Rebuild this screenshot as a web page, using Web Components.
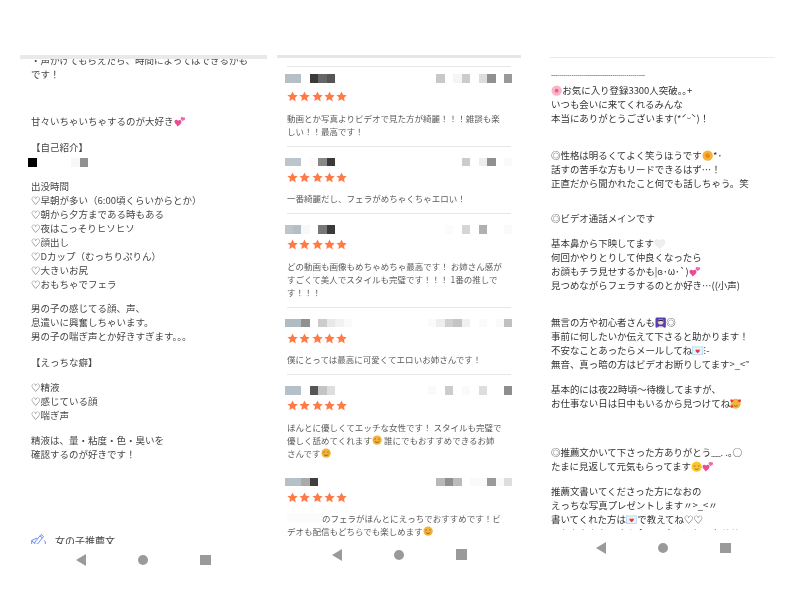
<!DOCTYPE html>
<html lang="ja">
<head>
<meta charset="utf-8">
<title>profile screens</title>
<style>
  html, body { margin: 0; height: 600px; overflow: hidden; background: #fff; }
  body { font-family: "Noto Sans CJK JP", "Noto Sans", sans-serif; }
</style>
</head>
<body>
<screen-strip>
  <phone-shot style="--shot-w:247px; --rule-h:4px; --rule-c:#e9e9e9; --clip-h:485px; --nav-top:10px; --nav-left:56px">
    <profile-text style="--fs:9.5px; --fc:#454545; --pad:11px">
      <p style="margin-top:-6px">・声かけてもらえたら、時間によってはできるかも<br>です！</p>
      <p style="margin-top:33px">甘々いちゃいちゃするのが大好き<e-moji kind="hearts"></e-moji></p>
      <p style="margin-top:12px">【自己紹介】</p>
      <pixel-strip cells="#000 . . . . #f8f8f8 #919191" size="8.6" style="margin:4px 0 0 -3px"></pixel-strip>
      <p style="margin-top:12px">出没時間<br>♡早朝が多い（6:00頃くらいからとか）<br>♡朝から夕方まである時もある<br>♡夜はこっそりヒソヒソ<br>♡顔出し<br>♡Dカップ（むっちりぷりん）<br>♡大きいお尻<br>♡おもちゃでフェラ</p>
      <p style="margin-top:10px">男の子の感じてる顔、声、<br>息遣いに興奮しちゃいます。<br>男の子の喘ぎ声とか好きすぎます。。。</p>
      <p style="margin-top:12px">【えっちな癖】</p>
      <p style="margin-top:11px">♡精液<br>♡感じている顔<br>♡喘ぎ声</p>
      <p style="margin-top:11px">精液は、量・粘度・色・臭いを<br>確認するのが好きです！</p>
      <section-head>女の子推薦文</section-head>
    </profile-text>
  </phone-shot>

  <phone-shot style="--shot-w:244px; --rule-h:2.5px; --rule-c:#e6e6e6; --clip-h:483px; --nav-top:8px; --nav-left:55px; margin-left:10px">
    <review-list>
      <review-row first cells="#b5bfc6 #b5bfc6 . #3a3a3a #666 #555 . . . . . . . . . . . . #c8c8c8 . #f5f5f5 #ccc . #ddd #909090 . #999">動画とか写真よりビデオで見た方が綺麗！！！雑談も楽<br>しい！！最高です！</review-row>
      <review-row cells="#bcc5cc #bcc5cc . #fbfbfb #888 #3a3a3a . . . . . . . . . . . . . . . #ccc . #eee #909090 . #fafafa">一番綺麗だし、フェラがめちゃくちゃエロい！</review-row>
      <review-row cells="#bcc5cc #b5bfc6 #f8f8f8 . #777 #3a3a3a . . . . . . . . . . . . . #fbfbfb . #d5d5d5 . #b0b0b0 . . #fafafa">どの動画も画像もめちゃめちゃ最高です！ お姉さん感が<br>すごくて美人でスタイルも完璧です！！！ 1番の推しで<br>す！！！</review-row>
      <review-row cells="#b0bcc4 #b0bcc4 #909090 . #ccc #e8e8e8 #f2f2f2 #fafafa . . . . . . . . . #fafafa #eee #d0d0d0 #c4c4c4 #f0f0f0 . #fafafa . #fafafa #c0c0c0">僕にとっては最高に可愛くてエロいお姉さんです！</review-row>
      <review-row cells="#b5c0c8 #b5c0c8 . #555 #c4c4c4 #ddd . . . . . . . . . . . #fafafa . #ccc . #fafafa . #ddd . . #8e8e8e">ほんとに優しくてエッチな女性です！ スタイルも完璧で<br>優しく舐めてくれます<e-moji kind="smile"></e-moji> 誰にでもおすすめできるお姉<br>さんです<e-moji kind="smile"></e-moji></review-row>
      <review-row last cells="#b5c0c8 #b5c0c8 #aaa #3f3f3f . . . . . . . . . . . . . . #b8b8b8 #909090 #bbb . #fafafa #fafafa #999 #fafafa #ddd"><span class="hide"></span>のフェラがほんとにえっちでおすすめです！ビ<br>デオも配信もどちらでも楽しめます<e-moji kind="smile"></e-moji></review-row>
    </review-list>
  </phone-shot>

  <phone-shot style="--shot-w:225px; --rule-h:1px; --rule-c:#fde1e9; --clip-h:472px; --nav-top:12px; --nav-left:46px; margin-left:29px; --rule-top:2px">
    <profile-text style="--fs:9.45px; --fc:#333; --pad:1px">
      <p style="margin-top:9px; font-size:6.6px; letter-spacing:-.25px">----------------------------------------------</p>
      <p style="margin-top:2px"><e-moji kind="blossom"></e-moji>お気に入り登録3300人突破｡｡+<br>いつも会いに来てくれるみんな<br>本当にありがとうございます(*ˊᵕˋ)！</p>
      <p style="margin-top:23px">◎性格は明るくてよく笑うほうです<e-moji kind="flower"></e-moji>*･<br>話すの苦手な方もリードできるはず…！<br>正直だから聞かれたこと何でも話しちゃう。笑</p>
      <p style="margin-top:21px">◎ビデオ通話メインです</p>
      <p style="margin-top:11px">基本鼻から下映してます<e-moji kind="whiteheart"></e-moji><br>何回かやりとりして仲良くなったら<br>お顔もチラ見せするかも|ɞ･ω･`)<e-moji kind="hearts"></e-moji><br>見つめながらフェラするのとか好き…((小声)</p>
      <p style="margin-top:23px">無言の方や初心者さんも<e-moji kind="person"></e-moji>◎<br>事前に何したいか伝えて下さると助かります！<br>不安なことあったらメールしてね<e-moji kind="mail"></e-moji>⁝-<br>無音、真っ暗の方はビデオお断りしてます&gt;_&lt;῀</p>
      <p style="margin-top:11px">基本的には夜22時頃〜待機してますが、<br>お仕事ない日は日中もいるから見つけてね<e-moji kind="inlove"></e-moji></p>
      <p style="margin-top:35px">◎推薦文かいて下さった方ありがとう﹏. .｡○<br>たまに見返して元気もらってます<e-moji kind="relieved"></e-moji><e-moji kind="hearts"></e-moji></p>
      <p style="margin-top:11px">推薦文書いてくださった方になおの<br>えっちな写真プレゼントします〃&gt;_&lt;〃<br>書いてくれた方は<e-moji kind="mail"></e-moji>で教えてね♡♡<br>これからもたくさん会いに来てほしいな♡♡</p>
    </profile-text>
  </phone-shot>
</screen-strip>

<script>
// small coloured emoji, there is no emoji font on the box
const EMOJI = {
    hearts: '<path fill="#e94b95" d="M2 8.5C-.5 6.500 .5 3.500 2.800 4c1 .2 1.400 1 1.400 1s.7-.9 1.800-.9c2.300.1 2.600 3 .6 4.700L3.900 11z"/><path fill="#ef6aa8" d="M7.500 4C6.300 2.400 7.300 .7 8.700 1c.6.100.9.600.9.600s.5-.5 1.200-.4c1.400.2 1.300 2 .1 3L8.900 5.300z"/>',
    blossom: '<circle cx="6" cy="6" r="5.500" fill="#f9b4c8"/><circle cx="6" cy="6" r="2" fill="#ec5f8a"/>',
    flower: '<circle cx="6" cy="6" r="5.500" fill="#f9b233"/><circle cx="6" cy="6" r="2.600" fill="#e98a1c"/>',
    whiteheart: '<path fill="#efefef" stroke="#dcdcdc" stroke-width=".5" d="M6 11C1 7.500 .2 5.500 .8 3.500 1.500 1.200 4.800 1 6 3.500 7.200 1 10.500 1.200 11.200 3.500c.6 2-.2 4-5.200 7.500z"/>',
    person: '<rect x=".5" y=".5" width="11" height="11" rx="1.500" fill="#5a3fb4"/><circle cx="6" cy="5" r="3" fill="#f3d6c8"/><path fill="#2f2440" d="M3 5c0-3 6-3 6 0-1-1-5-1-6 0z"/><path fill="#f7e3dc" d="M2 12c0-3 8-3 8 0z"/>',
    mail: '<rect x=".5" y="2" width="11" height="8" fill="#e6f3fc" stroke="#a9d4f2" stroke-width=".8"/><path fill="#e5392f" d="M6 8.800C3.500 7 3.400 5.800 3.900 5.100c.6-.7 1.700-.5 2.100.3.400-.8 1.500-1 2.100-.3.500.7.400 1.900-2.100 3.700z"/>',
    inlove: '<circle cx="6" cy="6" r="5.300" fill="#f5b53c"/><path fill="#e53935" d="M1.500 4.500C-.5 3 .5 1 1.800 1.500c.4.200.5.500.5.500s.3-.4.900-.2C4.500 2.300 3.500 4 1.500 4.500zM10.500 4.500C12.500 3 11.500 1 10.200 1.500c-.4.200-.5.500-.5.500s-.3-.4-.9-.2c-1.300.5-.3 2.200 1.700 2.700zM2 10.500c-2-.5-2.300-2.600-1-2.800.5 0 .7.300.7.300s.4-.4.900-.2c1.300.3 1.200 2-.6 2.700z"/><path fill="none" stroke="#7a4a10" stroke-width=".8" d="M4 7.700c1.200 1.300 2.800 1.300 4 0"/>',
    relieved: '<circle cx="6" cy="6" r="5.500" fill="#fbc531"/><path fill="none" stroke="#7a5a10" stroke-width=".8" d="M2.800 5c.6.600 1.400.6 2 0M7.200 5c.6.600 1.400.6 2 0M4 8c1.200 1.100 2.800 1.100 4 0"/>',
    smile: '<circle cx="6" cy="6" r="5.500" fill="#f2b339"/><path fill="none" stroke="#7d5310" stroke-width=".9" d="M2.900 5c.5-.6 1.300-.6 1.800 0M7.300 5c.5-.6 1.300-.6 1.800 0M3.300 7.500c1.500 1.700 3.900 1.700 5.400 0"/>'
};

class EMoji extends HTMLElement {
    connectedCallback() {
        this.attachShadow({ mode: 'open' }).innerHTML = `
      <style>
        :host { display: inline-block; width: 1.2em; height: 1.2em; vertical-align: -0.2em; }
        svg { display: block; width: 100%; height: 100%; }
      </style>
      <svg viewBox="0 0 12 12">${EMOJI[this.getAttribute('kind')] || ''}</svg>`;
    }
}

// the mosaic squares that hide names and dates
class PixelStrip extends HTMLElement {
    connectedCallback() {
        const size = this.getAttribute('size') || '8.45';
        const cells = (this.getAttribute('cells') || '').trim().split(/\s+/);
        const html = cells.map(c => `<i style="background:${c === '.' ? 'transparent' : c}"></i>`).join('');
        this.attachShadow({ mode: 'open' }).innerHTML = `
      <style>
        :host { display: block; }
        .row { display: flex; height: ${this.getAttribute('tall') || 8.5}px; }
        i { display: block; flex: 0 0 ${size}px; }
      </style>
      <div class="row">${html}</div>`;
    }
}

class StarRating extends HTMLElement {
    connectedCallback() {
        const star = '<svg viewBox="0 0 24 24"><path fill="#ff7a45" d="M12 1l3.400 7.300 7.900 1-5.800 5.500 1.500 7.900L12 17.900l-7 3.800 1.500-7.900L.7 9.300l7.900-1z"/></svg>';
        this.attachShadow({ mode: 'open' }).innerHTML = `
      <style>
        :host { display: flex; gap: 1.3px; height: 11px; }
        svg { display: block; width: 11px; height: 11px; }
      </style>
      ${star.repeat(5)}`;
    }
}

class ReviewRow extends HTMLElement {
    connectedCallback() {
        const first = this.hasAttribute('first');
        const last = this.hasAttribute('last');
        this.attachShadow({ mode: 'open' }).innerHTML = `
      <style>
        :host {
          display: block;
          padding: ${first ? '7.5px' : '11px'} 0 8px;
          border-top: ${first || !last ? '1px solid #e7e7e7' : 'none'};
        }
        pixel-strip { margin-left: -2.4px; }
        star-rating { margin-top: ${first ? '8.5px' : '5.5px'}; }
        .text {
          margin-top: 9.5px;
          font-size: 8.52px;
          line-height: 13px;
          color: #5c5c5c;
          white-space: nowrap;
        }
        ::slotted(.hide) {
          display: inline-block;
          width: 35px;
          height: 9px;
          background: #fcfcfc;
        }
      </style>
      <pixel-strip cells="${this.getAttribute('cells')}"></pixel-strip>
      <star-rating></star-rating>
      <div class="text"><slot></slot></div>`;
    }
}

class ReviewList extends HTMLElement {
    constructor() {
        super();
        this.attachShadow({ mode: 'open' }).innerHTML = `
      <style>
        :host { display: block; width: 224px; padding: 8px 0 0 10px; }
        ::slotted(review-row[last]) { padding-top: 10px; }
      </style>
      <slot></slot>`;
    }
}

class ProfileText extends HTMLElement {
    constructor() {
        super();
        this.attachShadow({ mode: 'open' }).innerHTML = `
      <style>
        :host {
          display: block;
          padding-left: var(--pad);
          font-size: var(--fs);
          line-height: 14px;
          color: var(--fc);
          white-space: nowrap;
        }
        ::slotted(p) { margin: 0; }
      </style>
      <slot></slot>`;
    }
}

class SectionHead extends HTMLElement {
    constructor() {
        super();
        this.attachShadow({ mode: 'open' }).innerHTML = `
      <style>
        :host {
          display: flex;
          align-items: flex-start;
          gap: 9px;
          margin-top: 73px;
          font-size: 10px;
          line-height: 14px;
          color: #444;
        }
        svg { display: block; width: 15px; height: 15px; margin-top: -1px; }
      </style>
      <svg viewBox="0 0 15 15" fill="none" stroke="#6f8bf0" stroke-width="1">
        <path d="M.7 15V7.500L6 5M.7 8l3 2M14.300 15V8.500l-1.500-1"/>
        <path d="M4 9l6-7.500 2.500 2-6 7.500-3 .7zM9 3l2.500 2"/>
      </svg>
      <span><slot></slot></span>`;
    }
}

class NavBar extends HTMLElement {
    constructor() {
        super();
        this.attachShadow({ mode: 'open' }).innerHTML = `
      <style>
        :host {
          display: flex;
          align-items: center;
          gap: 52px;
          padding: var(--nav-top) 0 0 var(--nav-left);
        }
        svg { display: block; width: 10px; height: 12px; fill: #9a9a9a; }
        .dot { width: 10px; height: 10px; border-radius: 50%; background: #9a9a9a; }
        .sq { width: 10.5px; height: 10.5px; background: #9a9a9a; }
      </style>
      <svg viewBox="0 0 10 12"><path d="M10 0v12L0 6z"/></svg>
      <div class="dot"></div>
      <div class="sq"></div>`;
    }
}

// one phone screenshot: rule on top, clipped content, then the android buttons
class PhoneShot extends HTMLElement {
    constructor() {
        super();
        this.attachShadow({ mode: 'open' }).innerHTML = `
      <style>
        :host { display: block; flex: 0 0 var(--shot-w); width: var(--shot-w); }
        .rule { height: var(--rule-h); margin-top: var(--rule-top, 0); background: var(--rule-c); }
        .clip { height: var(--clip-h); overflow: hidden; }
      </style>
      <div class="rule"></div>
      <div class="clip"><slot></slot></div>
      <nav-bar></nav-bar>`;
    }
}

class ScreenStrip extends HTMLElement {
    constructor() {
        super();
        this.attachShadow({ mode: 'open' }).innerHTML = `
      <style>
        :host {
          display: flex;
          align-items: flex-start;
          padding: 55px 0 0 20px;
          filter: blur(0.35px);
        }
      </style>
      <slot></slot>`;
    }
}

customElements.define('e-moji', EMoji);
customElements.define('pixel-strip', PixelStrip);
customElements.define('star-rating', StarRating);
customElements.define('review-row', ReviewRow);
customElements.define('review-list', ReviewList);
customElements.define('profile-text', ProfileText);
customElements.define('section-head', SectionHead);
customElements.define('nav-bar', NavBar);
customElements.define('phone-shot', PhoneShot);
customElements.define('screen-strip', ScreenStrip);
</script>
</body>
</html>
